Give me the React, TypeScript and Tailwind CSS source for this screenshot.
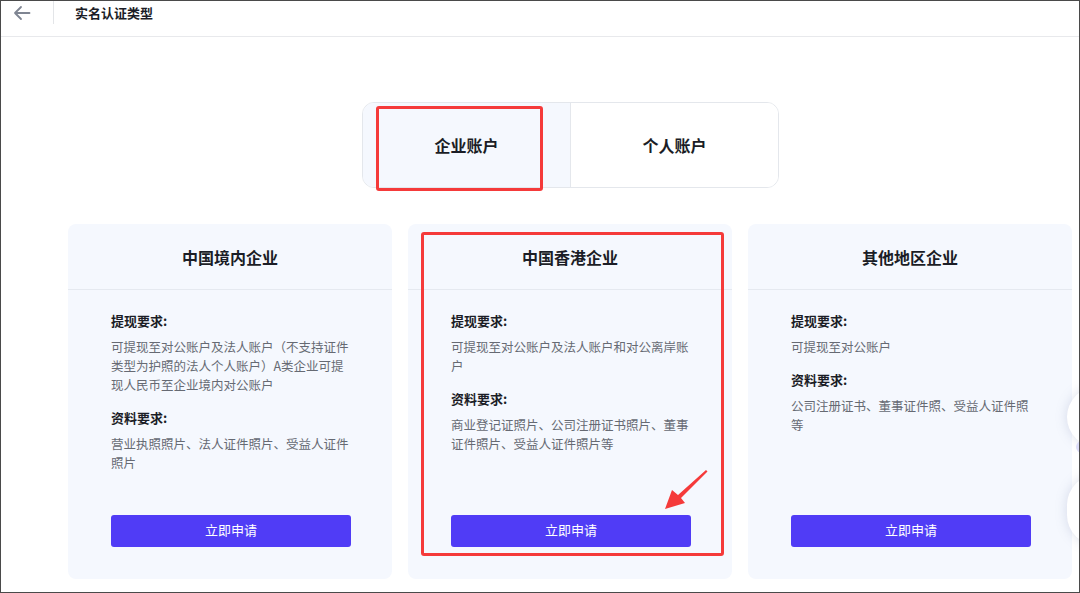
import React from "react";

const font = { fontFamily: '"Noto Sans CJK SC", "Noto Sans", sans-serif' };

type Card = { title: string; withdraw: string; docs: string };

const cards: Card[] = [
  {
    title: "中国境内企业",
    withdraw: "可提现至对公账户及法人账户（不支持证件类型为护照的法人个人账户）A类企业可提现人民币至企业境内对公账户",
    docs: "营业执照照片、法人证件照片、受益人证件照片",
  },
  {
    title: "中国香港企业",
    withdraw: "可提现至对公账户及法人账户和对公离岸账户",
    docs: "商业登记证照片、公司注册证书照片、董事证件照片、受益人证件照片等",
  },
  {
    title: "其他地区企业",
    withdraw: "可提现至对公账户",
    docs: "公司注册证书、董事证件照、受益人证件照等",
  },
];

function CardView({ c }: { c: Card }) {
  return (
    <div className="w-[324px] h-[355px] shrink-0 rounded-[8px] bg-[#f5f8fe] flex flex-col">
      <div className="h-[66px] flex items-center justify-center border-b border-[#e5e9f0]">
        <span className="text-[16px] font-bold text-[#1b1d26] leading-none">{c.title}</span>
      </div>
      <div className="flex-1 flex flex-col pl-[43px] pr-[41px] pt-[21px] pb-[32px]">
        <div className="text-[13px] font-bold text-[#1b1d26] leading-[20px]">提现要求:</div>
        <div className="mt-[6px] text-[12.5px] text-[#666a73] leading-[19px]">{c.withdraw}</div>
        <div className="mt-[14px] text-[13px] font-bold text-[#1b1d26] leading-[20px]">资料要求:</div>
        <div className="mt-[6px] text-[12.5px] text-[#666a73] leading-[19px]">{c.docs}</div>
        <button className="mt-auto h-[32px] w-full rounded-[3px] bg-[#503cf6] text-white text-[13px] leading-none flex items-center justify-center pb-[4px]">
          立即申请
        </button>
      </div>
    </div>
  );
}

export default function App() {
  return (
    <div
      className="relative w-[1080px] h-[593px] overflow-hidden bg-white border border-[#4a4a4a]"
      style={font}
    >
      {/* header */}
      <div className="h-[36px] border-b border-[#e8e9ec]">
        <div className="flex items-center h-[23px]">
          <div className="w-[52px] flex items-center justify-start pl-[12px]">
            <svg width="18" height="16" viewBox="0 0 18 16" fill="none">
              <path d="M16.5 8H2M8 2L2 8l6 6" stroke="#7f8592" strokeWidth="1.8" strokeLinecap="round" strokeLinejoin="round" />
            </svg>
          </div>
          <div className="w-px h-[23px] bg-[#e3e5e8]" />
          <div className="ml-[21px] text-[13px] font-bold text-[#1b1d26]">实名认证类型</div>
        </div>
      </div>

      {/* tabs */}
      <div className="mt-[65px] ml-[361px] w-[417px] h-[86px] flex rounded-[12px] border border-[#e4e7ec] overflow-hidden">
        <div className="w-[208px] bg-[#f5f8fe] flex items-center justify-center border-r border-[#e4e7ec]">
          <span className="text-[16px] font-bold text-[#1b1d26]">企业账户</span>
        </div>
        <div className="flex-1 bg-white flex items-center justify-center">
          <span className="text-[16px] font-bold text-[#1b1d26]">个人账户</span>
        </div>
      </div>

      {/* cards */}
      <div className="mt-[36px] ml-[67px] flex gap-[16px]">
        {cards.map((c) => (
          <CardView key={c.title} c={c} />
        ))}
      </div>

      {/* floating side buttons */}
      <div className="absolute left-[1066px] top-[386px] w-[60px] h-[60px] rounded-full bg-white shadow-[0_0_12px_rgba(120,130,170,0.25)]" />
      <div className="absolute left-[1075px] top-[440px] w-[12px] h-[12px] rounded-full bg-[#dcdcf8]" />
      <div className="absolute left-[1066px] top-[474px] w-[60px] h-[70px] rounded-[30px] bg-white shadow-[0_0_12px_rgba(120,130,170,0.25)]" />

      {/* annotation boxes */}
      <div className="absolute left-[375px] top-[105px] w-[167px] h-[85px] border-[3px] border-[#f53a3a] rounded-[3px]" />
      <div className="absolute left-[420px] top-[231px] w-[303px] h-[324px] border-[3px] border-[#f53a3a] rounded-[3px]" />
      <svg className="absolute left-[660px] top-[464px]" width="50" height="50" viewBox="0 0 50 50">
        <polygon points="45,5 46.5,6.5 20,33 24,38 4,44 11,25 17,30" fill="#f53a3a" />
      </svg>
    </div>
  );
}
